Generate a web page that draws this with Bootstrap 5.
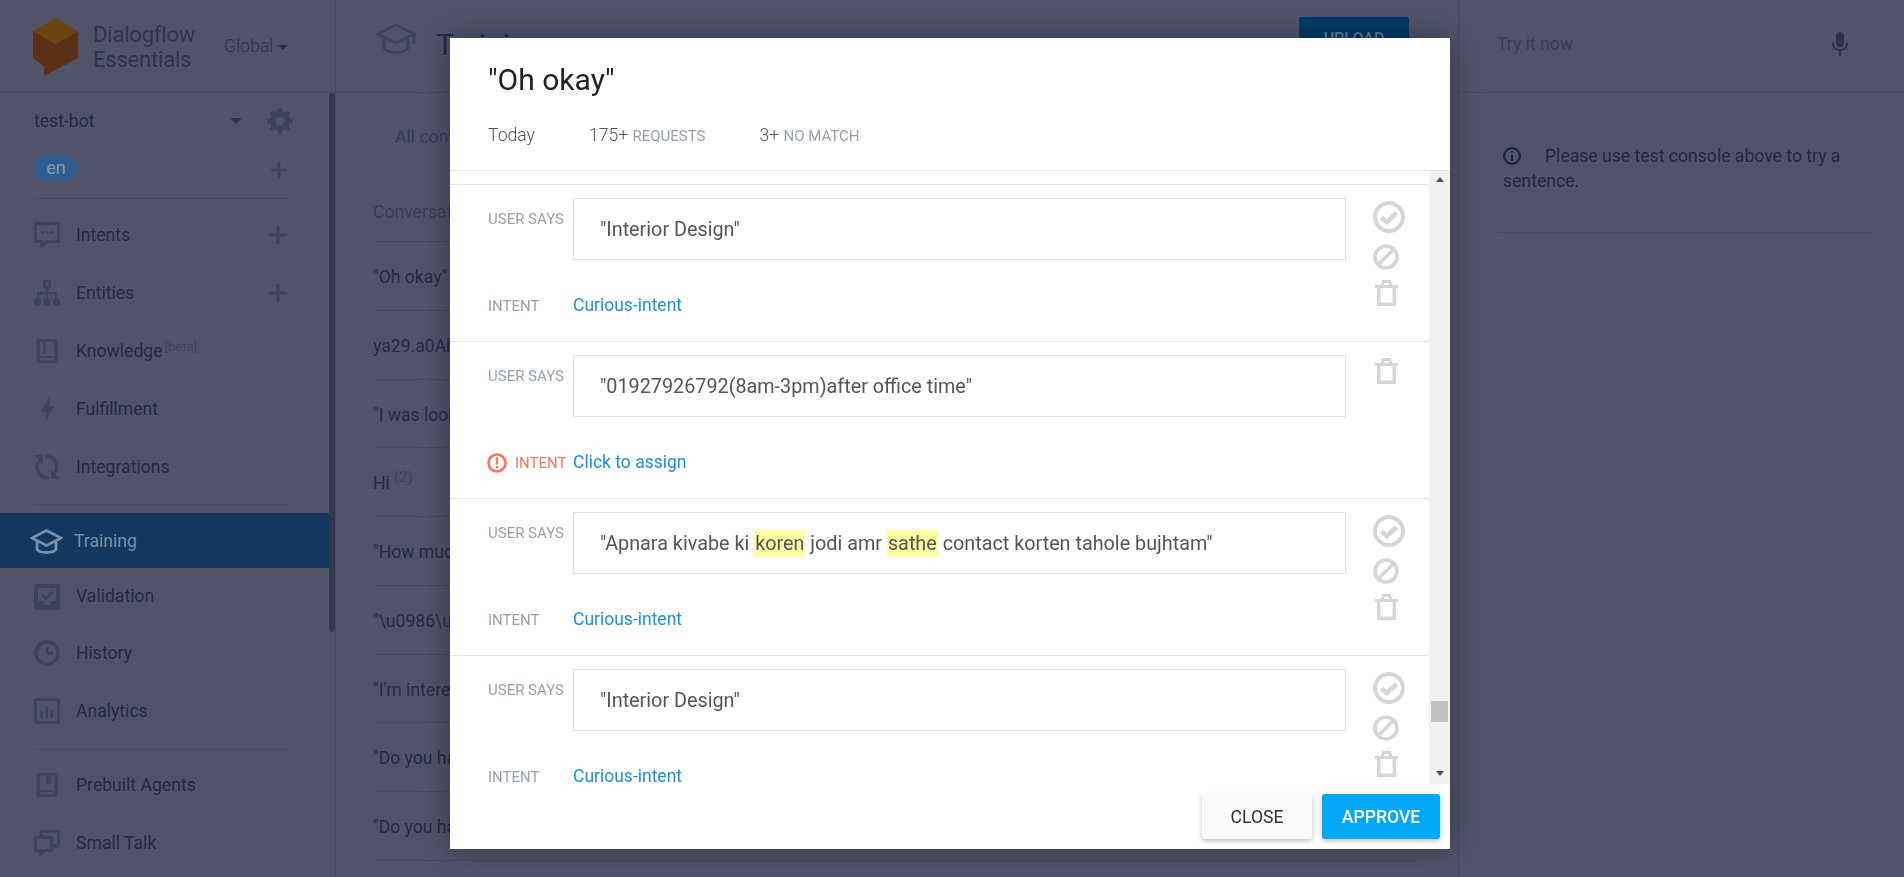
<!DOCTYPE html>
<html lang="en">
<head>
    <meta charset="UTF-8">
    <title>Dialogflow Essentials - Training</title>
    <link rel="stylesheet" href="https://cdn.jsdelivr.net/npm/bootstrap@5.3.0/dist/css/bootstrap.min.css">
    <style>
        html, body { height: 100%; overflow: hidden; }
        body { background: #515469; font-family: Roboto, "Liberation Sans", sans-serif; font-size: 17.6px; color: #262a42; }

        .app-side { width: 336px; flex: none; border-right: 1px solid #484b60; position: relative; }
        .app-main { width: 1122px; flex: none; }
        .app-right { flex: 1 1 auto; border-left: 1px solid #484b60; }
        .top-bar { height: 93px; border-bottom: 1px solid #484b60; flex: none; }

        .brand-logo { margin: 18px 15px 0 33px; flex: none; }
        .brand-name { font-size: 22px; line-height: 25px; color: #30344a; margin-top: 22px; letter-spacing: -.2px; }
        .brand-region { margin: 33px 0 0 29px; color: #30344a; font-weight: 300; font-size: 17.6px; }
        .caret-down { display: inline-block; width: 0; height: 0; border: 5px solid transparent; border-top-color: #2f3349; border-bottom: 0; vertical-align: middle; margin-left: 5px; }

        .side-scroll { position: absolute; left: 329px; top: 93px; width: 6px; height: 539px; background: #343750; border-radius: 3px; }
        .agent-row { height: 54px; padding: 2px 42px 0 34px; }
        .agent-row .caret-down { margin: 0 25px 0 auto; border-width: 6px 6px 0; }
        .lang-row { height: 51px; padding: 8px 48px 0 34px; align-items: flex-start; }
        .lang-pill { width: 44px; height: 26px; line-height: 26px; background: #2f5c8d; color: #7f9abb; font-weight: 400; font-size: 18px; padding: 0; }
        .lang-row .plus-sign { margin-top: 7px; }
        .side-rule { height: 1px; background: #484b60; margin: 8px 44px 0 34px; }
        .side-rule.first { margin-top: 0; margin-bottom: 6px; }
        .side-rule.mid { margin-top: 9px; margin-bottom: 8px; }
        .side-rule.low { margin-top: 10px; margin-bottom: 5px; }

        .side-link { height: 58px; padding: 2px 48px 0 34px; color: #262a42; gap: 16px; }
        .side-link.short { height: 55px; }
        .side-link svg.ico { flex: none; width: 26px; height: 26px; }
        .side-link.picked { background: #13375f; color: #7a90a8; width: 329px; padding-left: 30px; gap: 11px; }
        .side-link.picked svg.ico { width: 33px; height: 26px; }
        .beta-tag { font-size: 13px; color: #3f435a; margin-left: 2px; position: relative; top: -6px; }
        .plus-sign { margin-left: auto; flex: none; }

        .page-icon { margin: 23px 19px 0 39px; flex: none; }
        .page-title { font-size: 30px; margin-top: 22px; color: #262a42; }
        .upload-btn { background: #043a66; color: #5f7f9f; width: 110px; height: 44px; margin: 17px 49px 0 auto; border: 0; border-radius: 2px; font-weight: 500; font-size: 16px; }
        .tab-line { height: 80px; padding: 31px 0 0 59px; color: #3a3e54; }
        .convo-list { padding: 0 39px 0 37px; }
        .convo-line { height: 68.75px; padding-top: 3px; border-bottom: 1px solid #484b60; white-space: nowrap; color: #262a42; }
        .convo-line.head { color: #3a3e54; height: 69px; padding-top: 11px; }
        .convo-line sup { color: #3f435a; font-size: 15px; margin-left: 4px; }

        .try-line { padding: 0 55px 4px 38px; }
        .try-line span { color: #3a3e54; }
        .help-text { margin: 0 31px 0 38px; padding: 51px 0 38px 6px; border-bottom: 1px solid #484b60; line-height: 25px; color: #23273f; }
        .help-text svg { margin-right: 24px; vertical-align: -3px; }

        .convo-dialog { max-width: 1000px; width: 1000px; margin: 38px 0 0 450px; }
        .convo-box { height: 811px; border: 0; border-radius: 0; box-shadow: 0 0 26px rgba(0, 0, 0, .35); }
        .convo-head { height: 133px; padding: 0 38px; border-bottom: 1px solid #e6e6e6; border-radius: 0; }
        .convo-title { font-size: 30px; font-weight: 400; color: #222; line-height: 34px; padding-top: 25px; margin: 0; }
        .convo-stats { margin-top: 28px; color: #555; font-weight: 300; gap: 54px; line-height: 20px; }
        .convo-stats small { font-size: 15px; font-weight: 400; color: #9a9fb0; }

        .scroll-zone { height: 613px; }
        .scroll-rows { flex: 1 1 auto; overflow: hidden; }
        .scroll-gap { height: 14px; border-bottom: 1px solid #e6e6e6; }
        .say-row { height: 157px; border-bottom: 1px solid #e6e6e6; padding: 13px 0 0 38px; }
        .say-label { width: 85px; flex: none; font-size: 15px; color: #9a9fb0; white-space: nowrap; }
        .say-label.top { padding-top: 12px; line-height: 18px; }
        .say-box { width: 773px; height: 62px; border: 1px solid #e0e0e0; padding: 1px 26px 0; line-height: 60px; font-size: 19.8px; color: #555; white-space: nowrap; }
        .say-box span { background: #fdfda2; padding: 2px 1px; }
        .intent-line { margin-top: 37px; line-height: 18px; height: 18px; }
        .intent-line a { font-size: 17.5px; color: #1a90e2; text-decoration: none; margin-top: -1px; }
        .intent-warn { color: #ff7158; gap: 8px; margin-left: -1px; margin-right: 1px; }
        .row-tools { margin: 3px 0 0 27px; width: 32px; }
        .row-tools svg { display: block; }
        .row-tools .mark-ban { margin-top: 11px; }
        .row-tools .mark-bin { margin: 10px 0 0 2px; }

        .fake-bar { width: 21px; flex: none; background: #f1f1f1; }
        .bar-arrow { width: 0; height: 0; margin: 6px auto 0; border: 4.5px solid transparent; border-bottom: 5px solid #505050; border-top: 0; }
        .bar-arrow.lower { margin: 0 auto 8px; border-top: 5px solid #505050; border-bottom: 0; }
        .bar-thumb { width: 17px; height: 21px; margin: 519px auto auto; background: #c1c1c1; }

        .convo-foot { height: 65px; padding: 10px 10px 0 0; border: 0; border-radius: 0; align-items: flex-start; gap: 10px; }
        .convo-foot .btn { margin: 0; height: 45px; padding-top: 8px; border: 0; border-radius: 3px; font-size: 17.6px; font-weight: 500; box-shadow: 0 2px 5px rgba(0, 0, 0, .26); }
        .btn-shut { width: 110px; background: #f9f9f9; color: #333; font-weight: 400 !important; }
        .btn-okay { width: 118px; background: #03a9f4; color: #fff; }
    </style>
</head>
<body>
    <svg width="0" height="0" class="position-absolute">
        <symbol id="i-check" viewBox="0 0 32 32"><circle cx="16" cy="16" r="14" fill="none" stroke="#d6d6d6" stroke-width="4"/><path d="M8.500 16.500l5.500 4.500 9.500-9" fill="none" stroke="#d6d6d6" stroke-width="4.600"/></symbol>
        <symbol id="i-ban" viewBox="0 0 26 26"><circle cx="13" cy="13" r="11" fill="none" stroke="#d6d6d6" stroke-width="3.6"/><path d="M5 21L21 5" stroke="#d6d6d6" stroke-width="3.6"/></symbol>
        <symbol id="i-bin" viewBox="0 0 23 26"><path d="M0 5h23v3H0zM7 0h9l1 5h-3l-.5-2h-4L9 5H6z" fill="#d6d6d6"/><path d="M3.7 7v17.300h15.600V7" fill="none" stroke="#d6d6d6" stroke-width="3.4"/></symbol>
        <symbol id="i-plus" viewBox="0 0 18 18"><path d="M7.500 0h3v7.500H18v3h-7.500V18h-3v-7.500H0v-3h7.500z" fill="#40445a"/></symbol>
    </svg>

    <div class="d-flex vh-100">
        <aside class="app-side d-flex flex-column">
            <div class="top-bar d-flex">
                <svg class="brand-logo" width="45" height="58" viewBox="0 0 45 58">
                    <path d="M22.500 0L45 13 22.500 26 0 13z" fill="#6d4413"/>
                    <path d="M0 13l22.500 13L45 13v27L11 58V48L0 40z" fill="#5c3015"/>
                </svg>
                <div class="brand-name">Dialogflow<br>Essentials</div>
                <div class="brand-region">Global<i class="caret-down"></i></div>
            </div>
            <div class="side-scroll"></div>

            <div class="agent-row d-flex align-items-center">
                <span>test-bot</span>
                <i class="caret-down"></i>
                <svg width="26" height="26" viewBox="0 0 26 26"><path d="M11 0h4l.6 3.600 2.300 1 3-2.100 2.800 2.800-2.100 3 1 2.300L26 11v4l-3.400.6-1 2.300 2.100 3-2.800 2.800-3-2.100-2.300 1L15 26h-4l-.6-3.400-2.300-1-3 2.100-2.800-2.800 2.100-3-1-2.300L0 15v-4l3.400-.7 1-2.300-2.100-3 2.800-2.800 3 2.100 2.300-1zM13 8.500a4.500 4.500 0 1 0 0 9 4.500 4.500 0 0 0 0-9z" fill="#40445a"/></svg>
            </div>
            <div class="lang-row d-flex">
                <span class="badge rounded-pill lang-pill">en</span>
                <svg class="plus-sign" width="16" height="16"><use href="#i-plus"/></svg>
            </div>
            <div class="side-rule first"></div>

            <nav class="nav flex-column flex-nowrap">
                <a class="nav-link side-link d-flex align-items-center" href="#">
                    <svg class="ico" viewBox="0 0 26 26"><path d="M1.500 1.500h23v18H13l-5 4v-4H1.500z" fill="none" stroke="#40445a" stroke-width="3"/><path d="M7 9h3v3H7zM11.500 9h3v3h-3zM16 9h3v3h-3z" fill="#40445a"/></svg>
                    Intents
                    <svg class="plus-sign" width="18" height="18"><use href="#i-plus"/></svg>
                </a>
                <a class="nav-link side-link d-flex align-items-center" href="#">
                    <svg class="ico" viewBox="0 0 26 26"><path d="M9 0h8v8h-2.500v4H23v7h-2v-4.500h-7V19h-2v-4.500H5V19H3v-7h8.500V8H9zm2.500 2.500v3h3v-3z" fill="#40445a" fill-rule="evenodd"/><rect x="0" y="18" width="7" height="8" rx="2.500" fill="#40445a"/><rect x="9.500" y="18" width="7" height="8" rx="2.500" fill="#40445a"/><rect x="19" y="18" width="7" height="8" rx="2.500" fill="#40445a"/></svg>
                    Entities
                    <svg class="plus-sign" width="18" height="18"><use href="#i-plus"/></svg>
                </a>
                <a class="nav-link side-link d-flex align-items-center" href="#">
                    <svg class="ico" viewBox="0 0 26 26"><path d="M4 1h18a1.500 1.500 0 0 1 1.500 1.500v21A1.500 1.500 0 0 1 22 25H4a1.500 1.500 0 0 1-1.500-1.500V2.500A1.500 1.500 0 0 1 4 1zm2 3v14h14.500V4h-11zm0 16v2h14.500v-2z" fill="#40445a" fill-rule="evenodd"/><path d="M9 4h2.500v12H9z" fill="#40445a"/></svg>
                    <span>Knowledge<span class="beta-tag">[beta]</span></span>
                </a>
                <a class="nav-link side-link d-flex align-items-center" href="#">
                    <svg class="ico" viewBox="0 0 26 26"><path d="M15.500 0v10.500H20L12 26v-10H6.500z" fill="#40445a"/></svg>
                    Fulfillment
                </a>
                <a class="nav-link side-link d-flex align-items-center" href="#">
                    <svg class="ico" viewBox="0 0 26 26"><path d="M6 6A10.500 10.500 0 0 0 15 23.500M11 2.500A10.500 10.500 0 0 1 20 20" fill="none" stroke="#40445a" stroke-width="3.400"/><path d="M0 1h9v9zM26 25h-9v-9z" fill="#40445a"/></svg>
                    Integrations
                </a>
                <div class="side-rule mid"></div>
                <a class="nav-link side-link picked short d-flex align-items-center" href="#">
                    <svg class="ico" viewBox="0 0 33 26"><path d="M16.500 1.500L31 9l-14.500 7.500L2 9z" fill="none" stroke="#7a90a8" stroke-width="2.600"/><path d="M7 13v7.500c3 4 16 4 19 0V13" fill="none" stroke="#7a90a8" stroke-width="2.800"/></svg>
                    Training
                </a>
                <a class="nav-link side-link short d-flex align-items-center" href="#">
                    <svg class="ico" viewBox="0 0 26 26"><path d="M2 0h22a2 2 0 0 1 2 2v22a2 2 0 0 1-2 2H2a2 2 0 0 1-2-2V2a2 2 0 0 1 2-2zm2 4v13h5l1.500 4h5l1.500-4h5V4z" fill="#40445a" fill-rule="evenodd"/><path d="M8 10.500l4 4 7-7" fill="none" stroke="#40445a" stroke-width="2.800"/></svg>
                    Validation
                </a>
                <a class="nav-link side-link d-flex align-items-center" href="#">
                    <svg class="ico" viewBox="0 0 26 26"><circle cx="13" cy="13" r="11.200" fill="none" stroke="#40445a" stroke-width="3.400"/><path d="M12 7h2.800v5h4.700v2.800H12z" fill="#40445a"/></svg>
                    History
                </a>
                <a class="nav-link side-link d-flex align-items-center" href="#">
                    <svg class="ico" viewBox="0 0 26 26"><rect x="1.500" y="1.500" width="23" height="23" rx="1" fill="none" stroke="#40445a" stroke-width="3"/><path d="M6.500 13H9v7H6.500zM11.500 8.500H14V20h-2.500zM16.500 11.500H19V20h-2.500z" fill="#40445a"/></svg>
                    Analytics
                </a>
                <div class="side-rule low"></div>
                <a class="nav-link side-link d-flex align-items-center" href="#">
                    <svg class="ico" viewBox="0 0 26 26"><path d="M4 1h18a1.500 1.500 0 0 1 1.500 1.500v21A1.500 1.500 0 0 1 22 25H4a1.500 1.500 0 0 1-1.500-1.500V2.500A1.500 1.500 0 0 1 4 1zm2 3v14h14.500V4zm0 16v2h14.500v-2z" fill="#40445a" fill-rule="evenodd"/><path d="M12 4h5v8.500L14.500 11 12 12.500z" fill="#40445a"/></svg>
                    Prebuilt Agents
                </a>
                <a class="nav-link side-link d-flex align-items-center" href="#">
                    <svg class="ico" viewBox="0 0 26 26"><path d="M7 6V1.500h17.500V16H19" fill="none" stroke="#40445a" stroke-width="3"/><path d="M1.500 7.500h16v13h-7l-4 3.500v-3.500h-5z" fill="none" stroke="#40445a" stroke-width="3"/></svg>
                    Small Talk
                </a>
            </nav>
        </aside>

        <main class="app-main d-flex flex-column">
            <div class="top-bar d-flex">
                <svg class="page-icon" width="42" height="32" viewBox="0 0 42 32"><path d="M21 2l18 9-18 9-18-9z" fill="none" stroke="#40445a" stroke-width="3"/><path d="M9 16v9c4 6 20 6 24 0v-9M39 11v10" fill="none" stroke="#40445a" stroke-width="3"/></svg>
                <div class="page-title">Training</div>
                <button class="btn upload-btn" type="button">UPLOAD</button>
            </div>
            <div class="tab-line">All conversations</div>
            <div class="convo-list">
                <div class="convo-line head d-flex align-items-center">Conversation</div>
                <div class="convo-line d-flex align-items-center">"Oh okay"</div>
                <div class="convo-line d-flex align-items-center">ya29.a0AbVbY6</div>
                <div class="convo-line d-flex align-items-center">"I was looking"</div>
                <div class="convo-line d-flex align-items-center"><span>Hi<sup>(2)</sup></span></div>
                <div class="convo-line d-flex align-items-center">"How much"</div>
                <div class="convo-line d-flex align-items-center">"\u0986\u09aa"</div>
                <div class="convo-line d-flex align-items-center">"I'm interested"</div>
                <div class="convo-line d-flex align-items-center">"Do you have"</div>
                <div class="convo-line d-flex align-items-center">"Do you have"</div>
            </div>
        </main>

        <section class="app-right d-flex flex-column">
            <div class="top-bar try-line d-flex align-items-center justify-content-between">
                <span>Try it now</span>
                <svg width="18" height="24" viewBox="0 0 18 24"><rect x="5" y="0" width="8" height="15" rx="4" fill="#2f3349"/><path d="M1.500 10.500c0 10 15 10 15 0M9 18v6" fill="none" stroke="#2f3349" stroke-width="2"/></svg>
            </div>
            <div class="help-text">
                <svg width="18" height="18" viewBox="0 0 18 18"><circle cx="9" cy="9" r="7.800" fill="none" stroke="#1d2140" stroke-width="2.200"/><path d="M8 4h2v2H8zM8 7.500h2V14H8z" fill="#1d2140"/></svg>Please use test console above to try a sentence.
            </div>
        </section>
    </div>

    <div class="modal d-block" tabindex="-1">
        <div class="modal-dialog convo-dialog">
            <div class="modal-content convo-box">
                <div class="modal-header convo-head d-block">
                    <h5 class="convo-title">"Oh okay"</h5>
                    <div class="convo-stats d-flex">
                        <span>Today</span>
                        <span>175+ <small>REQUESTS</small></span>
                        <span>3+ <small>NO MATCH</small></span>
                    </div>
                </div>
                <div class="modal-body p-0 d-flex scroll-zone">
                    <div class="scroll-rows">
                        <div class="scroll-gap"></div>

                        <div class="say-row d-flex">
                            <div>
                                <div class="d-flex">
                                    <div class="say-label top">USER SAYS</div>
                                    <div class="say-box">"Interior Design"</div>
                                </div>
                                <div class="intent-line d-flex">
                                    <div class="say-label">INTENT</div>
                                    <a href="#">Curious-intent</a>
                                </div>
                            </div>
                            <div class="row-tools">
                                <svg width="32" height="32"><use href="#i-check"/></svg>
                                <svg class="mark-ban" width="26" height="26"><use href="#i-ban"/></svg>
                                <svg class="mark-bin" width="23" height="26"><use href="#i-bin"/></svg>
                            </div>
                        </div>

                        <div class="say-row d-flex">
                            <div>
                                <div class="d-flex">
                                    <div class="say-label top">USER SAYS</div>
                                    <div class="say-box">"01927926792(8am-3pm)after office time"</div>
                                </div>
                                <div class="intent-line d-flex">
                                    <div class="say-label intent-warn d-flex align-items-center">
                                        <svg width="20" height="20" viewBox="0 0 20 20"><circle cx="10" cy="10" r="8.500" fill="none" stroke="#ff7158" stroke-width="2.600"/><path d="M8.800 4.500h2.400v7H8.800zM8.800 13h2.400v2.400H8.800z" fill="#ff7158"/></svg>
                                        INTENT
                                    </div>
                                    <a href="#">Click to assign</a>
                                </div>
                            </div>
                            <div class="row-tools">
                                <svg class="mark-bin mt-0" width="23" height="26"><use href="#i-bin"/></svg>
                            </div>
                        </div>

                        <div class="say-row d-flex">
                            <div>
                                <div class="d-flex">
                                    <div class="say-label top">USER SAYS</div>
                                    <div class="say-box">"Apnara kivabe ki <span>koren</span> jodi amr <span>sathe</span> contact korten tahole bujhtam"</div>
                                </div>
                                <div class="intent-line d-flex">
                                    <div class="say-label">INTENT</div>
                                    <a href="#">Curious-intent</a>
                                </div>
                            </div>
                            <div class="row-tools">
                                <svg width="32" height="32"><use href="#i-check"/></svg>
                                <svg class="mark-ban" width="26" height="26"><use href="#i-ban"/></svg>
                                <svg class="mark-bin" width="23" height="26"><use href="#i-bin"/></svg>
                            </div>
                        </div>

                        <div class="say-row d-flex">
                            <div>
                                <div class="d-flex">
                                    <div class="say-label top">USER SAYS</div>
                                    <div class="say-box">"Interior Design"</div>
                                </div>
                                <div class="intent-line d-flex">
                                    <div class="say-label">INTENT</div>
                                    <a href="#">Curious-intent</a>
                                </div>
                            </div>
                            <div class="row-tools">
                                <svg width="32" height="32"><use href="#i-check"/></svg>
                                <svg class="mark-ban" width="26" height="26"><use href="#i-ban"/></svg>
                                <svg class="mark-bin" width="23" height="26"><use href="#i-bin"/></svg>
                            </div>
                        </div>
                    </div>
                    <div class="fake-bar d-flex flex-column">
                        <div class="bar-arrow"></div>
                        <div class="bar-thumb"></div>
                        <div class="bar-arrow lower"></div>
                    </div>
                </div>
                <div class="modal-footer convo-foot">
                    <button class="btn btn-shut" type="button">CLOSE</button>
                    <button class="btn btn-okay" type="button">APPROVE</button>
                </div>
            </div>
        </div>
    </div>
</body>
</html>
